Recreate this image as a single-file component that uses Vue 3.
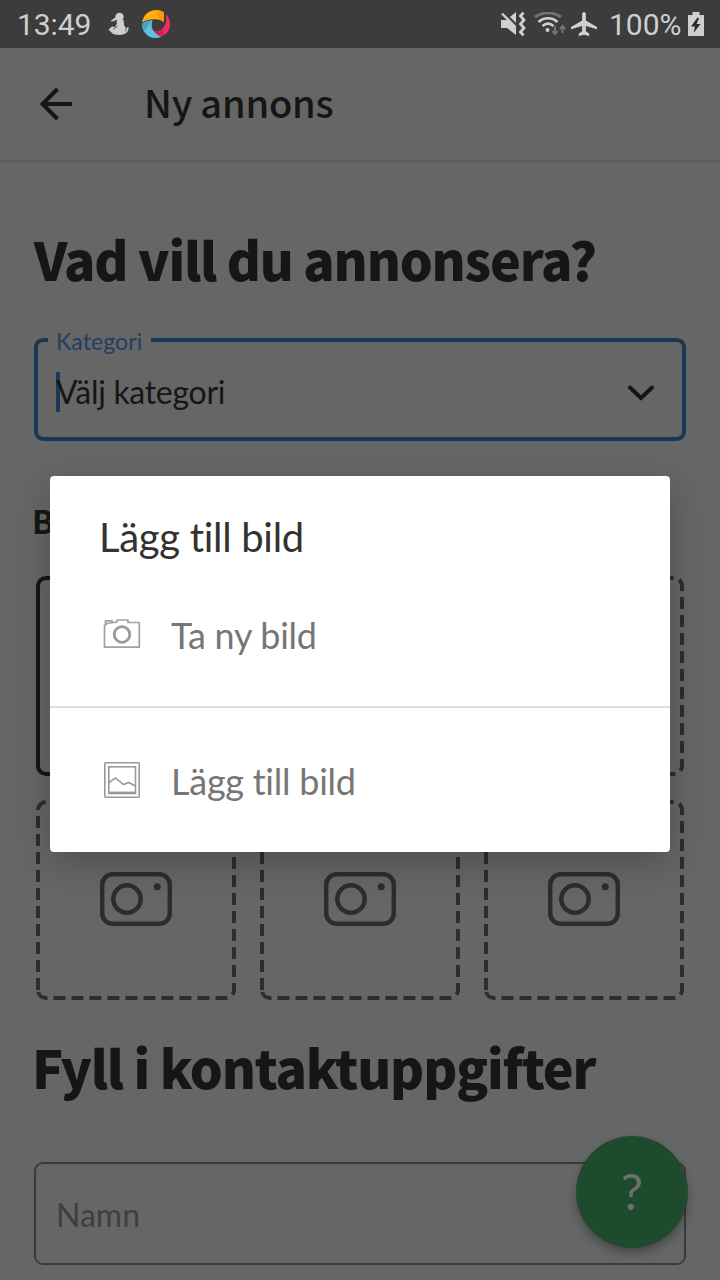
<script setup>
const slots = [
  { id: 1, main: true },
  { id: 2 },
  { id: 3 },
  { id: 4 },
  { id: 5 },
  { id: 6 },
]
</script>

<template>
  <div class="screen">
    <div class="status">
      <span class="clock">13:49</span>
      <svg class="ic-figure" width="22" height="24" viewBox="0 0 22 24">
        <g fill="#cfcfcf">
          <circle cx="11.500" cy="5" r="4.200" />
          <path d="M8 8.500 4.500 10 2.500 9l6-4.500zM8.500 8h7l.7 5.500c2.200 2 2 5 .2 6.500 1.800-.5 2.300-2.500 2.300-4.500l1.800-.5c.3 4-1.700 6.500-4.500 7-2 1.300-9 1.300-11.500-.5L.5 17.500l3.500-3 3 .5 1.800-3z" />
        </g>
        <path d="m5 17.300 4.500-3M3.500 9.800l5.500-1.300" stroke="#3c3c3c" stroke-width=".8" fill="none" />
      </svg>
      <svg class="ic-swirl" width="28" height="28" viewBox="0 0 28 28">
        <path d="M.2 12.500C1 5 7 0 14 0c3.500 0 6 1 8 2.500L21.500 12C19.500 9.700 16 9 12.500 9.200 8 9.500 3 10 .2 12.500z" fill="#ffb010" />
        <path d="M14 0c3.500 0 6 1 8 2.500L21.500 12c-1.500-1.500-3-2.200-4.500-2.500z" fill="#ff980c" />
        <path d="M23.500 4C27 7 28.200 11 28 15c-.3 5-3 9.500-8 11-4 .5-7-2-8.500-5 4 1 7.500-.5 10-3.500 2.500-3.500 3.500-8 2-13.500z" fill="#ee2c68" />
        <path d="M22 24.500c-4.500 3-8.500.5-10.500-3.500 4 1 6.500 0 8.500-2z" fill="#d91c50" />
        <path d="M0 14c3-3 6.500-3.800 10.500-3.500C9 14 9.500 19 12.500 22c2 2.500 4 4 7 4.800C15 29 8.500 28.200 5 25 1.500 22 0 18 0 14z" fill="#5fbfdc" />
        <path d="M0 14c3-3 6.500-3.800 10.500-3.500C7 12.500 6 17 2 21 .6 18.500 0 16.500 0 14z" fill="#3da5cf" />
      </svg>
      <span class="grow"></span>
      <svg class="ic-mute" width="26" height="24" viewBox="0 0 26 24">
        <path d="M1 8h5l10-8v23l-9-7H1z" fill="#cfcfcf" />
        <path d="M3 0 18 15" stroke="#3c3c3c" stroke-width="3" />
        <path d="M2 1.500 15.500 15" stroke="#cfcfcf" stroke-width="2.400" />
        <path d="M23.500.5 20.500 4l3.500 4-3.500 4 3.500 4-3.500 4 3 3.500" fill="none" stroke="#cfcfcf" stroke-width="2.800" />
      </svg>
      <svg class="ic-wifi" width="32" height="24" viewBox="0 0 32 24">
        <path d="M1 5c8-5.500 18-5.500 26 0" fill="none" stroke="#747474" stroke-width="2.800" />
        <g fill="none" stroke="#cfcfcf" stroke-width="2.600">
          <path d="M4.500 10c5.500-5 13.500-5 19 0" />
          <path d="M8.500 14c3.500-3 7.500-3 11 0" />
        </g>
        <circle cx="13.500" cy="18" r="2" fill="#cfcfcf" />
        <path d="M21 14v8m-2.700-3 2.700 3 2.700-3M28.500 21v-7m-2.700 3 2.700-3 2.700 3" fill="none" stroke="#747474" stroke-width="2" />
      </svg>
      <svg class="ic-plane" width="26" height="24" viewBox="0 0 26 24">
        <path d="M13 0c1.300 0 1.900 1 1.900 2.300v6.200L26 15v2.300L14.900 14v5.300l3.400 2.500V24L13 22.700 7.700 24v-2.200l3.400-2.500V14L0 17.300V15l11.100-6.500V2.300C11.100 1 11.700 0 13 0z" fill="#cfcfcf" />
      </svg>
      <span class="percent">100%</span>
      <svg class="ic-battery" width="16" height="24" viewBox="0 0 16 24">
        <path d="M4.500 0h7v3H16v21H0V3h4.500z" fill="#cfcfcf" />
        <path d="M9.500 5.500 3 14.500h4L5.500 21 12.500 12H8.500L11 6.500z" fill="#2a2a2a" />
      </svg>
    </div>

    <header class="appbar">
      <svg class="back" width="34" height="34" viewBox="0 0 34 34" fill="none" stroke="#161614" stroke-width="4">
        <path d="M33 17H4M18.500 2 3.500 17l15 15" />
      </svg>
      <h1 class="title">Ny annons</h1>
    </header>

    <main class="content">
      <h2 class="heading h-first">Vad vill du annonsera?</h2>

      <div class="field active">
        <span class="legend">Kategori</span>
        <i class="caret"></i>
        <span class="value">Välj kategori</span>
        <svg class="chevron" width="26" height="16" viewBox="0 0 26 16">
          <path d="M2 2.500 13 13 24 2.500" fill="none" stroke="#161614" stroke-width="4" stroke-linecap="round" />
        </svg>
      </div>

      <h3 class="sub">B</h3>

      <div class="grid">
        <svg v-for="s in slots" :key="s.id" class="slot" width="200" height="200" viewBox="0 0 200 200" fill="none">
          <path
            d="M2 190V10A8 8 0 0 1 10 2H190A8 8 0 0 1 198 10V190A8 8 0 0 1 190 198H10A8 8 0 0 1 2 190Z"
            :stroke="s.main ? '#161614' : '#2d2d2b'"
            :stroke-dasharray="s.main ? 'none' : '12 6'"
            stroke-width="4"
          />
          <g stroke="#2d2d2b" stroke-width="4.500">
            <rect x="66.200" y="74.200" width="67.600" height="49.600" rx="10.500" />
            <circle cx="91" cy="99" r="13.700" />
            <circle cx="121.300" cy="86.700" r="3.500" fill="#2d2d2b" stroke="none" />
          </g>
        </svg>
      </div>

      <h2 class="heading h-second">Fyll i kontaktuppgifter</h2>

      <div class="field plain">
        <span class="placeholder">Namn</span>
      </div>
    </main>

    <div class="fab"><span>?</span></div>

    <div class="dialog">
      <div class="dlg-title"><span>Lägg till bild</span></div>
      <div class="row first">
        <svg width="38" height="38" viewBox="0 0 38 38" fill="none" stroke="#a0a0a0" stroke-width="1.700">
          <path d="M1.500 10.500 4 8.500 14 7V5h11v2.500h11.300v24.700H1.500z" stroke-linejoin="round" />
          <path d="M2.500 9.500V5.800h6.500v1.500" />
          <circle cx="19" cy="19.500" r="7.800" stroke="#999" stroke-width="2.800" />
        </svg>
        <span class="opt-a">Ta ny bild</span>
      </div>
      <div class="row second">
        <svg width="38" height="38" viewBox="0 0 38 38" fill="none" stroke="#999" stroke-width="1.600">
          <rect x="1.800" y="1.800" width="34.400" height="34.400" rx="1" />
          <rect x="5.800" y="5.800" width="26.700" height="26.700" />
          <path d="M6 31.800h26.500" stroke-width="2.400" />
          <path d="M6 21.500 12.500 17l8 6.500 5-2 7 3.500" />
        </svg>
        <span class="opt-b">Lägg till bild</span>
      </div>
    </div>
  </div>
</template>

<style>
body {
  margin: 0;
  background: #666;
}
</style>

<style scoped>
.screen {
  position: relative;
  width: 720px;
  height: 1280px;
  overflow: hidden;
  background: #666;
  color: #161614;
  font-family: Lato, "Noto Sans", sans-serif;
  font-variant-ligatures: none;
}
.screen span,
h1,
h2,
h3 {
  white-space: nowrap;
}
.status {
  height: 48px;
  box-sizing: border-box;
  padding: 0 16px 0 17px;
  display: flex;
  align-items: center;
  background: #3c3c3c;
  color: #cfcfcf;
  font-family: Roboto, sans-serif;
  font-size: 30px;
  line-height: 50px;
}
.clock,
.percent {
  padding-top: 1px;
}
.clock {
  width: 91px;
  letter-spacing: -0.1px;
}
.ic-swirl {
  margin: -1px 0 0 12px;
}
.grow {
  flex: 1;
}
.ic-wifi {
  margin-left: 8px;
}
.ic-plane {
  margin-left: 5px;
}
.percent {
  width: 73px;
  margin-left: 12px;
}
.ic-battery {
  margin-left: 6px;
}
.appbar {
  height: 112px;
  display: flex;
  align-items: center;
  padding-left: 39px;
  box-shadow: 0 1px 3px rgba(0, 0, 0, 0.2);
}
.title {
  margin: -4px 0 0 71px;
  font-family: "Noto Sans CJK SC", sans-serif;
  font-weight: 500;
  font-size: 38px;
  line-height: 56px;
  letter-spacing: -0.25px;
}
.content {
  padding: 0 34px;
}
.heading {
  margin: 0;
  font-family: "Noto Sans CJK SC", sans-serif;
  font-weight: 900;
  font-size: 52px;
  line-height: 76px;
  letter-spacing: -1.2px;
}
.h-first {
  padding-top: 61px;
  height: 117px;
}
.h-second {
  padding-top: 29px;
  height: 133px;
  margin-left: -2px;
}
.field {
  position: relative;
  display: flex;
  align-items: center;
  box-sizing: border-box;
  height: 103px;
  border-radius: 9px;
}
.active {
  border: 4px solid #1a3755;
  padding: 4px 28px 0 18px;
}
.legend {
  position: absolute;
  left: 10px;
  top: -15px;
  width: 103px;
  height: 28px;
  box-sizing: border-box;
  padding-left: 8px;
  background: #666;
  color: #1f4063;
  font-size: 23px;
  line-height: 28px;
  letter-spacing: 0.1px;
}
.caret {
  width: 4px;
  height: 40px;
  background: #1a3755;
}
.value {
  margin-left: -4px;
  flex: 1;
  font-size: 32px;
  letter-spacing: -0.3px;
}
.chevron {
  margin-top: 2px;
}
.sub {
  margin: 0 0 0 -2px;
  height: 135px;
  box-sizing: border-box;
  padding-top: 55px;
  font-family: "Noto Sans CJK SC", sans-serif;
  font-weight: 700;
  font-size: 32px;
  line-height: 48px;
}
.grid {
  display: grid;
  grid-template-columns: repeat(3, 200px);
  gap: 24px;
  padding-left: 2px;
}
.slot {
  display: block;
}
.plain {
  border: 2px solid #3b3b3b;
  padding: 1px 0 0 20px;
}
.placeholder {
  color: #3f3f3f;
  font-size: 32px;
}
.fab {
  position: absolute;
  left: 576px;
  top: 1136px;
  width: 112px;
  height: 112px;
  border-radius: 50%;
  background: #1e4a2e;
  color: #6a706c;
  box-shadow: 0 5px 10px rgba(0, 0, 0, 0.3);
  font-size: 50px;
  line-height: 110px;
  text-align: center;
}
.dialog {
  position: absolute;
  left: 50px;
  top: 476px;
  width: 620px;
  height: 376px;
  background: #fff;
  border-radius: 4px;
  box-shadow: 0 12px 36px rgba(0, 0, 0, 0.22);
}
.dlg-title {
  height: 88px;
  box-sizing: border-box;
  padding: 36px 0 0 49px;
  color: #333230;
  font-size: 40px;
  line-height: 50px;
  letter-spacing: -0.3px;
}
.row {
  display: flex;
  align-items: center;
  padding-left: 53px;
  box-sizing: border-box;
  gap: 30px;
  color: #767676;
  font-size: 36px;
  letter-spacing: -0.25px;
}
.first {
  height: 144px;
  padding-bottom: 2px;
  border-bottom: 2px solid #ddd;
}
.second {
  height: 144px;
}
.opt-a,
.opt-b {
  padding-top: 1px;
}
</style>
